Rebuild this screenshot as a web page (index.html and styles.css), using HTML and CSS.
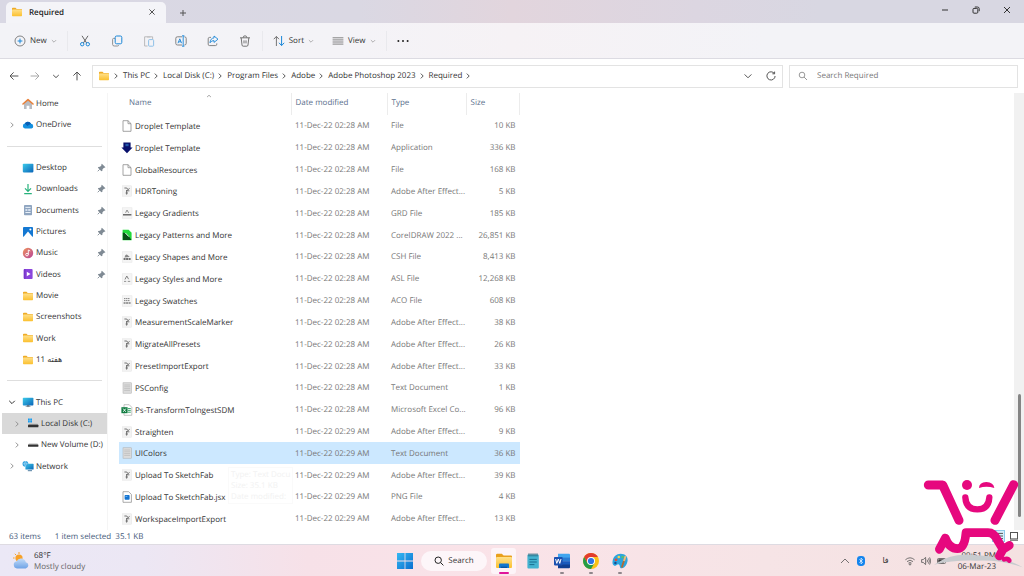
FILE: index.html
```html
<!DOCTYPE html>
<html lang="en">
<head>
  <meta charset="UTF-8">
  <title>Required</title>
  <link rel="stylesheet" href="styles.css">
</head>
<body>

<!-- icon sprite -->
<svg class="sprite" aria-hidden="true">
  <defs>
    <linearGradient id="gFolder" x1="0" y1="0" x2="0" y2="1"><stop offset="0" stop-color="#ffe08a"/><stop offset="1" stop-color="#fbc02f"/></linearGradient>
    <linearGradient id="gBlue" x1="0" y1="0" x2="1" y2="1"><stop offset="0" stop-color="#3ccbea"/><stop offset="1" stop-color="#0a64b8"/></linearGradient>
    <linearGradient id="gMusic" x1="0" y1="0" x2="1" y2="1"><stop offset="0" stop-color="#f0935a"/><stop offset="1" stop-color="#b7449a"/></linearGradient>
    <linearGradient id="gWin" x1="0" y1="0" x2="1" y2="1"><stop offset="0" stop-color="#35b8f2"/><stop offset="1" stop-color="#0a6fd0"/></linearGradient>
    <linearGradient id="gCloud" x1="0" y1="0" x2="0" y2="1"><stop offset="0" stop-color="#c3dcf8"/><stop offset="1" stop-color="#6fa3e6"/></linearGradient>
  </defs>
  <symbol id="folder" viewBox="0 0 12 12"><path d="M1 2.6q0-.8.8-.8h2.7l1.2 1.1h4.5q.8 0 .8.8V6H1z" fill="#eeab26"/><rect x="1" y="3.5" width="10" height="6.7" rx=".7" fill="url(#gFolder)"/></symbol>
  <symbol id="home" viewBox="0 0 12 12"><path d="M2 5.5 6 2l4 3.5V11H7.4V7.8H4.6V11H2z" fill="#b9bcc2"/><path d="M1 6 6 1.6 11 6" fill="none" stroke="#e8813a" stroke-width="1.6" stroke-linecap="round" stroke-linejoin="round"/></symbol>
  <symbol id="onedrive" viewBox="0 0 12 12"><path d="M3 9.5a2.5 2.5 0 0 1-.2-4.9A3.4 3.4 0 0 1 9 4.8a2.4 2.4 0 0 1 .5 4.7z" fill="#1490df"/><path d="M2.8 4.6A3.4 3.4 0 0 1 9 4.8L5.4 7z" fill="#0a5fb5"/></symbol>
  <symbol id="desktop" viewBox="0 0 12 12"><rect x=".8" y="1.8" width="10.6" height="8.6" rx=".8" fill="url(#gBlue)"/></symbol>
  <symbol id="download" viewBox="0 0 12 12"><path d="M6 1v7M3 5.4l3 3 3-3M2.2 10.7h7.6" fill="none" stroke="#27b27c" stroke-width="1.2"/></symbol>
  <symbol id="document" viewBox="0 0 12 12"><rect x="2" y="1" width="8" height="10.2" rx=".8" fill="#8fa5c0"/><path d="M3.4 3.4h5.2M3.4 8.5h5.2" stroke="#e9f0f8"/><path d="M3.4 5h2v2h-2zM6.2 5h2.4v2H6.2z" fill="#d5e0ee"/></symbol>
  <symbol id="picture" viewBox="0 0 12 12"><rect x="1" y="1" width="10" height="10" rx=".9" fill="#1478d2"/><path d="M1.4 11 6 5.4 10.6 11z" fill="#fff"/><circle cx="8.4" cy="3.6" r="1" fill="#fff"/></symbol>
  <symbol id="music" viewBox="0 0 12 12"><circle cx="6" cy="6" r="5.2" fill="url(#gMusic)"/><circle cx="5" cy="7.6" r="1.3" fill="none" stroke="#fff" stroke-width=".9"/><path d="M6.3 7.6V3l1.9 1" fill="none" stroke="#fff" stroke-width=".9"/></symbol>
  <symbol id="video" viewBox="0 0 12 12"><rect x="1.6" y="1" width="9" height="10" rx="1" fill="#8a45dc"/><path d="M2.8 1.4v9.4" stroke="#5b22ac" stroke-width="1.2" stroke-dasharray="1 1"/><path d="M4.8 3.8v4.4L8.6 6z" fill="#fff"/></symbol>
  <symbol id="pc" viewBox="0 0 12 12"><rect x=".8" y="1.8" width="10.6" height="7.6" rx=".7" fill="url(#gBlue)"/><path d="M5 9.4h2.2v1.2H5zM3.6 10.5H8.6" stroke="#7d8b98" stroke-width=".6"/></symbol>
  <symbol id="diskwin" viewBox="0 0 12 12"><path d="M1 .6h1.8v1.8H1zM3.200.6H5v1.800H3.200zM1 2.800h1.800v1.800H1zM3.200 2.800H5v1.800H3.200z" fill="#199df0"/><path d="M2 5.800h8.400l1 1.200H1z" fill="#aaa"/><rect x="1" y="6.800" width="10.400" height="2.400" rx=".5" fill="#333"/></symbol>
  <symbol id="disk" viewBox="0 0 12 12"><path d="M2 4.4h8.4l1 1.2H1z" fill="#bbb"/><rect x="1" y="5.4" width="10.4" height="2.4" rx=".5" fill="#333"/></symbol>
  <symbol id="network" viewBox="0 0 12 12"><rect x="3.4" y="3.8" width="8.2" height="5.8" rx=".6" fill="url(#gBlue)"/><path d="M5.8 10.7h4.2" stroke="#4f7ea2"/><circle cx="3.4" cy="3.8" r="2.9" fill="#2f9fdd"/><path d="M.6 3.8h5.6M3.4 1q-2 2.8 0 5.6M3.4 1q2 2.8 0 5.6" fill="none" stroke="#bfe8fb" stroke-width=".5"/></symbol>
  <symbol id="pin" viewBox="0 0 10 10"><path d="M5.4.8 9.400 4.600l-.9.8-.7-.1-1.700 1.700-.1 1.700-1.100.5L1 5.400l.5-1 1.900-.1L5 2.600l-.2-.9z" fill="#7f8a94"/><path d="M3 7 .8 9.200" stroke="#7f8a94"/></symbol>
  <symbol id="right" viewBox="0 0 8 8"><path d="m2.8 1.6 2.4 2.4-2.4 2.4" fill="none" stroke="currentColor" stroke-width=".9"/></symbol>
  <symbol id="down" viewBox="0 0 8 8"><path d="M1.2 2.8 4 5.6l2.8-2.8" fill="none" stroke="currentColor" stroke-width="1"/></symbol>

  <symbol id="f-page" viewBox="0 0 12 12"><path d="M2 .7h5L10 3.6v7.7H2z" fill="#fff" stroke="#8d8d8d" stroke-width=".8"/><path d="M7 .7v3h3" fill="none" stroke="#8d8d8d" stroke-width=".8"/></symbol>
  <symbol id="f-droplet" viewBox="0 0 12 12"><path d="M2.400.600h7.200v4.800h2L6 11.300.4 5.400h2z" fill="#08106b"/><path d="M4.400 1.800h3.200v2.400H4.400z" fill="#235aa9"/></symbol>
  <symbol id="f-script" viewBox="0 0 12 12"><rect x="1.6" y=".8" width="9" height="10.4" fill="#f3f3f3" stroke="#e2e2e2" stroke-width=".5"/><path d="M3.4 3h2.4l1 1.4M8.6 3.4l-3 2.4h2.8M5.6 5v4.6M7 8h-2.4" fill="none" stroke="#666" stroke-width=".9"/></symbol>
  <symbol id="f-grd" viewBox="0 0 12 12"><rect x="1.2" y=".8" width="9.8" height="10.4" fill="#f5f5f5" stroke="#e2e2e2" stroke-width=".5"/><path d="M4.6 5.8 6 3l1.6 2.8" fill="none" stroke="#777" stroke-width=".8"/><path d="M2 7.8h8.4" stroke="#555" stroke-width="1.3"/></symbol>
  <symbol id="f-csh" viewBox="0 0 12 12"><rect x="1.2" y=".8" width="9.8" height="10.4" fill="#f5f5f5" stroke="#e2e2e2" stroke-width=".5"/><path d="M3.4 6.4q1.2-4 2.8-2.6T8.8 6z" fill="#888"/><path d="M2.6 8h7" stroke="#444" stroke-width="1.3" stroke-dasharray="2 .5"/></symbol>
  <symbol id="f-asl" viewBox="0 0 12 12"><rect x="1.2" y=".8" width="9.8" height="10.4" fill="#f5f5f5" stroke="#e2e2e2" stroke-width=".5"/><path d="M4 6.4 5.8 3l1.8 3.2" fill="none" stroke="#777" stroke-width=".9"/><path d="M3 8.4h2.2M6.8 8.4h2.4" stroke="#888" stroke-width=".9"/></symbol>
  <symbol id="f-aco" viewBox="0 0 12 12"><rect x="1.2" y=".8" width="9.8" height="10.4" fill="#f5f5f5" stroke="#e2e2e2" stroke-width=".5"/><path d="M3 3.6h6M3 5.6h6" stroke="#777" stroke-width=".9" stroke-dasharray="1.4 .5"/><path d="M2.6 8h7" stroke="#444" stroke-width="1.2" stroke-dasharray="2 .5"/></symbol>
  <symbol id="f-corel" viewBox="0 0 12 12"><path d="M1.6.8h6l3 3v7.4h-9z" fill="#22d83a"/><path d="M1.8 3.6q4 .2 8.6 7.4H1.8z" fill="#075115"/><path d="M4.400 4 7.800 7.600" stroke="#fff" stroke-width=".9"/></symbol>
  <symbol id="f-text" viewBox="0 0 12 12"><rect x="2" y=".8" width="8.4" height="10.4" fill="#dcdcdc" stroke="#aaa" stroke-width=".5"/><path d="M3.2 3h6M3.2 4.8h6M3.2 6.6h6M3.2 8.4h6" stroke="#b3b3b3" stroke-width=".6"/></symbol>
  <symbol id="f-excel" viewBox="0 0 12 12"><path d="M3 .7h5.2l2.6 2.6v8H3z" fill="#fff" stroke="#9a9a9a" stroke-width=".6"/><path d="M7 4.6h2.8M7 6.4h2.8M7 8.2h2.8" stroke="#35a86b" stroke-width="1"/><rect x=".4" y="3.2" width="6.2" height="6" fill="#107c41"/><path d="m2.2 4.6 2.6 3.2M4.8 4.6 2.2 7.8" stroke="#fff" stroke-width=".9"/></symbol>
  <symbol id="f-png" viewBox="0 0 12 12"><path d="M2 .7h5.6L10.4 3.4v7.9H2z" fill="#fff" stroke="#888" stroke-width=".7"/><rect x="3.6" y="4" width="5" height="4.8" rx=".8" fill="#1473d0"/><path d="M4.4 5.4h2" stroke="#7cc4ff" stroke-width=".8"/></symbol>
</svg>

<header class="titlebar">
  <div class="tab">
    <svg class="icon"><use href="#folder"/></svg>
    <span class="tab-title">Required</span>
    <button class="tab-close" aria-label="Close tab"><svg viewBox="0 0 8 8"><path d="m1.4 1.4 5.2 5.2M6.6 1.4 1.4 6.6"/></svg></button>
  </div>
  <button class="new-tab" aria-label="New tab"><svg viewBox="0 0 8 8"><path d="M4 1v6M1 4h6"/></svg></button>
  <div class="window-buttons">
    <button aria-label="Minimize"><svg viewBox="0 0 8 8"><path d="M1 4h6"/></svg></button>
    <button aria-label="Restore"><svg viewBox="0 0 8 8"><rect x="1" y="2.4" width="4.8" height="4.8" rx="1"/><path d="M2.8 1h2.6Q7.2 1 7.2 2.8v2.4"/></svg></button>
    <button aria-label="Close"><svg viewBox="0 0 8 8"><path d="m1 1 6 6M7 1 1 7"/></svg></button>
  </div>
</header>

<div class="toolbar">
  <button class="tool tool-new">
    <svg class="icon" viewBox="0 0 12 12"><circle cx="6" cy="6" r="5" fill="none" stroke="#666" stroke-width=".8"/><path d="M6 3.6v4.8M3.6 6h4.8" stroke="#1a87d8"/></svg>
    New <svg class="caret"><use href="#down"/></svg>
  </button>
  <div class="tool-icons">
    <button class="tool" aria-label="Cut"><svg class="icon" viewBox="0 0 12 12"><path d="M3 .8 7.6 8M9 .8 4.4 8" fill="none" stroke="#555" stroke-width=".9"/><circle cx="3.2" cy="9.2" r="1.7" fill="none" stroke="#1a87d8"/><circle cx="8.8" cy="9.2" r="1.7" fill="none" stroke="#1a87d8"/></svg></button>
    <button class="tool" aria-label="Copy"><svg class="icon" viewBox="0 0 12 12"><path d="M4 3.4H2.6q-1 0-1 1v5q0 1.6 1.6 1.6h3.4q1 0 1-1" fill="none" stroke="#888" stroke-width=".9"/><rect x="4.2" y="1" width="6.6" height="7.8" rx="1.4" fill="none" stroke="#1a87d8"/></svg></button>
    <button class="tool faded" aria-label="Paste"><svg class="icon" viewBox="0 0 12 12"><path d="M4.6 11H1.6V1.8h8v2.4" fill="none" stroke="#777" stroke-width=".9"/><path d="M4 1h3.4v1.6H4z" fill="#999"/><rect x="5.6" y="4.6" width="5" height="6.6" rx=".8" fill="none" stroke="#1a87d8" stroke-width=".9"/></svg></button>
    <button class="tool" aria-label="Rename"><svg class="icon" viewBox="0 0 12 12"><path d="M7 1.8H2.4Q.8 1.8.8 3.4v5q0 1.6 1.6 1.6H7M9.4 1.8q1.8 0 1.8 1.6v5q0 1.6-1.8 1.6" fill="none" stroke="#777" stroke-width=".9"/><path d="M3 8.2 4.8 3.8l1.8 4.4M3.6 6.8H6M8.2.8v10.4M7 .8h2.4M7 11.2h2.4" fill="none" stroke="#1a87d8" stroke-width=".9"/></svg></button>
    <button class="tool" aria-label="Share"><svg class="icon" viewBox="0 0 12 12"><path d="M4 2.4H2.6q-1.4 0-1.4 1.4v5.4q0 1.4 1.4 1.4h5.8q1.4 0 1.4-1.4V8.4" fill="none" stroke="#777" stroke-width=".9"/><path d="M7 1 11 4.2 7 7.4V5.6Q4.4 5.4 3 7.8 3.4 3.2 7 2.9z" fill="none" stroke="#1a87d8" stroke-width=".9" stroke-linejoin="round"/></svg></button>
    <button class="tool" aria-label="Delete"><svg class="icon" viewBox="0 0 12 12"><path d="M1 2.8h10M4.2 2.6q0-1.8 1.8-1.8t1.8 1.8M2.2 3l.8 7q.1 1.2 1.2 1.2h3.6q1.1 0 1.2-1.2l.8-7M5 5.4v3M7 5.4v3" fill="none" stroke="#666" stroke-width=".9"/></svg></button>
  </div>
  <div class="tool-menus">
    <button class="tool">
      <svg class="icon" viewBox="0 0 12 12"><path d="M3.4 11V1.6M.8 4.2l2.6-2.8L6 4.2" fill="none" stroke="#666" stroke-width=".9"/><path d="M8.6 1v9.4M6 7.8l2.6 2.8 2.6-2.8" fill="none" stroke="#1a87d8"/></svg>
      Sort <svg class="caret"><use href="#down"/></svg>
    </button>
    <button class="tool">
      <svg class="icon" viewBox="0 0 12 12"><path d="M.6 2.8h10.8M.6 4.9h10.8M.6 7h10.8M.6 9.1h10.8" stroke="#777" stroke-width=".9"/></svg>
      View <svg class="caret"><use href="#down"/></svg>
    </button>
  </div>
  <button class="tool" aria-label="See more"><svg class="icon" viewBox="0 0 12 12"><circle cx="1.4" cy="6" r="1" fill="#222"/><circle cx="6" cy="6" r="1" fill="#222"/><circle cx="10.6" cy="6" r="1" fill="#222"/></svg></button>
</div>

<div class="address-row">
  <div class="nav-buttons">
    <button aria-label="Back"><svg viewBox="0 0 10 10"><path d="M9.4 5H1M4.6 1.4 1 5l3.6 3.6"/></svg></button>
    <button class="faded" aria-label="Forward"><svg viewBox="0 0 10 10"><path d="M.6 5H9M5.4 1.4 9 5 5.4 8.6"/></svg></button>
    <button aria-label="Recent locations"><svg viewBox="0 0 10 10"><path d="M2.2 4 5 6.6 7.8 4"/></svg></button>
    <button aria-label="Up"><svg viewBox="0 0 10 10"><path d="M5 9.4V1M1.4 4.6 5 1l3.6 3.6"/></svg></button>
  </div>
  <div class="address-bar">
    <svg class="icon"><use href="#folder"/></svg>
    <svg class="sep"><use href="#right"/></svg>
    <a href="#">This PC</a>
    <svg class="sep"><use href="#right"/></svg>
    <a href="#">Local Disk (C:)</a>
    <svg class="sep"><use href="#right"/></svg>
    <a href="#">Program Files</a>
    <svg class="sep"><use href="#right"/></svg>
    <a href="#">Adobe</a>
    <svg class="sep"><use href="#right"/></svg>
    <a href="#">Adobe Photoshop 2023</a>
    <svg class="sep"><use href="#right"/></svg>
    <a href="#">Required</a>
    <svg class="sep"><use href="#right"/></svg>
    <div class="address-actions">
      <button aria-label="Previous locations"><svg viewBox="0 0 10 10"><path d="M1.6 3.4 5 6.8l3.4-3.4"/></svg></button>
      <button aria-label="Refresh"><svg viewBox="0 0 10 10"><path d="M8.4 2.6A4.1 4.1 0 1 0 9.1 5M8.6.6v2.2H6.4"/></svg></button>
    </div>
  </div>
  <label class="search-box">
    <svg viewBox="0 0 10 10"><circle cx="4" cy="4" r="2.8"/><path d="m6 6 3 3"/></svg>
    <input type="search" placeholder="Search Required" aria-label="Search Required">
  </label>
</div>

<main class="content">
  <nav class="sidebar">
    <ul>
      <li><a href="#"><span class="twist"></span><svg class="icon"><use href="#home"/></svg>Home</a></li>
      <li><a href="#"><svg class="twist"><use href="#right"/></svg><svg class="icon"><use href="#onedrive"/></svg>OneDrive</a></li>
      <li class="divider"></li>
      <li><a href="#"><span class="twist"></span><svg class="icon"><use href="#desktop"/></svg>Desktop<svg class="pin"><use href="#pin"/></svg></a></li>
      <li><a href="#"><span class="twist"></span><svg class="icon"><use href="#download"/></svg>Downloads<svg class="pin"><use href="#pin"/></svg></a></li>
      <li><a href="#"><span class="twist"></span><svg class="icon"><use href="#document"/></svg>Documents<svg class="pin"><use href="#pin"/></svg></a></li>
      <li><a href="#"><span class="twist"></span><svg class="icon"><use href="#picture"/></svg>Pictures<svg class="pin"><use href="#pin"/></svg></a></li>
      <li><a href="#"><span class="twist"></span><svg class="icon"><use href="#music"/></svg>Music<svg class="pin"><use href="#pin"/></svg></a></li>
      <li><a href="#"><span class="twist"></span><svg class="icon"><use href="#video"/></svg>Videos<svg class="pin"><use href="#pin"/></svg></a></li>
      <li><a href="#"><span class="twist"></span><svg class="icon"><use href="#folder"/></svg>Movie</a></li>
      <li><a href="#"><span class="twist"></span><svg class="icon"><use href="#folder"/></svg>Screenshots</a></li>
      <li><a href="#"><span class="twist"></span><svg class="icon"><use href="#folder"/></svg>Work</a></li>
      <li><a href="#"><span class="twist"></span><svg class="icon"><use href="#folder"/></svg><span>11 <bdi lang="fa">هفته</bdi></span></a></li>
      <li class="divider"></li>
      <li><a href="#"><svg class="twist open"><use href="#down"/></svg><svg class="icon"><use href="#pc"/></svg>This PC</a></li>
      <li class="nested selected"><a href="#"><svg class="twist"><use href="#right"/></svg><svg class="icon"><use href="#diskwin"/></svg>Local Disk (C:)</a></li>
      <li class="nested"><a href="#"><svg class="twist"><use href="#right"/></svg><svg class="icon"><use href="#disk"/></svg>New Volume (D:)</a></li>
      <li><a href="#"><svg class="twist"><use href="#right"/></svg><svg class="icon"><use href="#network"/></svg>Network</a></li>
    </ul>
  </nav>

  <section class="files">
    <table>
      <thead>
        <tr>
          <th class="col-name">Name<svg class="sort-mark" viewBox="0 0 8 8"><path d="M1.4 5.4 4 3l2.6 2.4"/></svg></th>
          <th class="col-date">Date modified</th>
          <th class="col-type">Type</th>
          <th class="col-size">Size</th>
        </tr>
      </thead>
      <tbody>
        <tr><td><svg class="icon"><use href="#f-page"/></svg>Droplet Template</td><td>11-Dec-22 02:28 AM</td><td>File</td><td>10 KB</td></tr>
        <tr><td><svg class="icon"><use href="#f-droplet"/></svg>Droplet Template</td><td>11-Dec-22 02:28 AM</td><td>Application</td><td>336 KB</td></tr>
        <tr><td><svg class="icon"><use href="#f-page"/></svg>GlobalResources</td><td>11-Dec-22 02:28 AM</td><td>File</td><td>168 KB</td></tr>
        <tr><td><svg class="icon"><use href="#f-script"/></svg>HDRToning</td><td>11-Dec-22 02:28 AM</td><td>Adobe After Effect...</td><td>5 KB</td></tr>
        <tr><td><svg class="icon"><use href="#f-grd"/></svg>Legacy Gradients</td><td>11-Dec-22 02:28 AM</td><td>GRD File</td><td>185 KB</td></tr>
        <tr><td><svg class="icon"><use href="#f-corel"/></svg>Legacy Patterns and More</td><td>11-Dec-22 02:28 AM</td><td>CorelDRAW 2022 ...</td><td>26,851 KB</td></tr>
        <tr><td><svg class="icon"><use href="#f-csh"/></svg>Legacy Shapes and More</td><td>11-Dec-22 02:28 AM</td><td>CSH File</td><td>8,413 KB</td></tr>
        <tr><td><svg class="icon"><use href="#f-asl"/></svg>Legacy Styles and More</td><td>11-Dec-22 02:28 AM</td><td>ASL File</td><td>12,268 KB</td></tr>
        <tr><td><svg class="icon"><use href="#f-aco"/></svg>Legacy Swatches</td><td>11-Dec-22 02:28 AM</td><td>ACO File</td><td>608 KB</td></tr>
        <tr><td><svg class="icon"><use href="#f-script"/></svg>MeasurementScaleMarker</td><td>11-Dec-22 02:28 AM</td><td>Adobe After Effect...</td><td>38 KB</td></tr>
        <tr><td><svg class="icon"><use href="#f-script"/></svg>MigrateAllPresets</td><td>11-Dec-22 02:28 AM</td><td>Adobe After Effect...</td><td>26 KB</td></tr>
        <tr><td><svg class="icon"><use href="#f-script"/></svg>PresetImportExport</td><td>11-Dec-22 02:28 AM</td><td>Adobe After Effect...</td><td>33 KB</td></tr>
        <tr><td><svg class="icon"><use href="#f-text"/></svg>PSConfig</td><td>11-Dec-22 02:28 AM</td><td>Text Document</td><td>1 KB</td></tr>
        <tr><td><svg class="icon"><use href="#f-excel"/></svg>Ps-TransformToIngestSDM</td><td>11-Dec-22 02:28 AM</td><td>Microsoft Excel Co...</td><td>96 KB</td></tr>
        <tr><td><svg class="icon"><use href="#f-script"/></svg>Straighten</td><td>11-Dec-22 02:29 AM</td><td>Adobe After Effect...</td><td>9 KB</td></tr>
        <tr class="selected"><td><svg class="icon"><use href="#f-text"/></svg>UIColors</td><td>11-Dec-22 02:29 AM</td><td>Text Document</td><td>36 KB</td></tr>
        <tr><td><svg class="icon"><use href="#f-script"/></svg>Upload To SketchFab</td><td>11-Dec-22 02:29 AM</td><td>Adobe After Effect...</td><td>39 KB</td></tr>
        <tr><td><svg class="icon"><use href="#f-png"/></svg>Upload To SketchFab.jsx</td><td>11-Dec-22 02:29 AM</td><td>PNG File</td><td>4 KB</td></tr>
        <tr><td><svg class="icon"><use href="#f-script"/></svg>WorkspaceImportExport</td><td>11-Dec-22 02:29 AM</td><td>Adobe After Effect...</td><td>13 KB</td></tr>
      </tbody>
    </table>
    <!-- tooltip fading out -->
    <div class="tooltip">Type: Text Docu<br>Size: 35.1 KB<br>Date modified:</div>
  </section>

  <div class="scrollbar"><div class="thumb"></div></div>
</main>

<div class="statusbar">
  <span>63 items</span>
  <span>1 item selected&nbsp; 35.1 KB</span>
  <div class="view-switch">
    <button class="active" aria-label="Details"><svg viewBox="0 0 10 10"><path d="M1 2.4h8M1 5h8M1 7.6h8"/></svg></button>
    <button aria-label="Large icons"><svg viewBox="0 0 10 10"><rect x="1.5" y="1.5" width="7" height="6.4"/><path d="M1 9.2h8"/></svg></button>
  </div>
</div>

<footer class="taskbar">
  <a class="weather" href="#">
    <svg viewBox="0 0 18 18"><circle cx="7" cy="6" r="3.6" fill="#f7a128"/><path d="M7 0v2M1 6h1.6M2.8 1.8l1.2 1.2" stroke="#f7a128"/><path d="M5 16.4a3.6 3.6 0 0 1-.4-7.1 4.9 4.9 0 0 1 9.2 1 3.1 3.1 0 0 1 0 6.1z" fill="url(#gCloud)"/></svg>
    <span>68°F<br><small>Mostly cloudy</small></span>
  </a>
  <div class="apps">
    <button class="app" aria-label="Start"><svg viewBox="0 0 16 16"><path d="M0 0h7.6v7.6H0zM8.4 0H16v7.6H8.4zM0 8.4h7.6V16H0zM8.4 8.4H16V16H8.4z" fill="url(#gWin)"/></svg></button>
    <button class="task-search"><svg viewBox="0 0 10 10"><circle cx="4.2" cy="4.2" r="3.2"/><path d="m6.6 6.6 2.8 2.8"/></svg>Search</button>
    <button class="app running current" aria-label="File Explorer"><svg viewBox="0 0 16 16"><path d="M0 2q0-1.2 1.2-1.2h4.6L7.6 2.6H15q1 0 1 1V8H0z" fill="#e9a01c"/><rect y="4" width="16" height="11" rx="1" fill="url(#gFolder)"/><path d="M3 15v-3.6q0-.8.8-.8h8.4q.8 0 .8.8V15z" fill="#1477cf"/><path d="M5 15v-1.4h6V15z" fill="#0a56a4"/></svg></button>
    <button class="app" aria-label="Notepad"><svg viewBox="0 0 16 16"><rect x="2.4" y="1.6" width="11.4" height="14" rx="1" fill="#45b3d0"/><path d="M4 .4v3M6 .4v3M8 .4v3M10 .4v3M12 .4v3" stroke="#285f73"/><path d="M4.4 6.4h7.4M4.4 9h7.4M4.4 11.6h5" stroke="#1b6f90"/></svg></button>
    <button class="app running" aria-label="Word"><svg viewBox="0 0 16 16"><path d="M4 .8h11q1 0 1 1v3.4H4z" fill="#41a5ee"/><path d="M4 4.6h12v3.8H4z" fill="#2b7cd3"/><path d="M4 8.2h12V12H4z" fill="#185abd"/><path d="M4 11.6h12v2.6q0 1-1 1H4z" fill="#103f91"/><rect y="4" width="8.6" height="8.4" rx=".8" fill="#1b51b0"/><path d="m1.6 6 1.2 4.4L4.3 6l1.5 4.4L7 6" fill="none" stroke="#fff"/></svg></button>
    <button class="app running" aria-label="Chrome"><svg viewBox="0 0 16 16"><circle cx="8" cy="8" r="8" fill="#fbc116"/><path d="M1.1 4A8 8 0 0 1 14.9 4H8L4.6 10z" fill="#e33b2e"/><path d="M1.1 4A8 8 0 0 0 8 16l3.5-6-3.5 2-3.5-2z" fill="#259b48"/><circle cx="8" cy="8" r="4" fill="#fff"/><circle cx="8" cy="8" r="3.1" fill="#2f74e5"/></svg></button>
    <button class="app running" aria-label="Paint"><svg viewBox="0 0 16 16"><path d="M8.6.8C13 .8 16 3.6 15.6 7.4c-.3 3-2.4 7.8-6 7.8-2.6 0-1-3.4-3-3.8-1.6-.3-2.4 2-4.2 1.4C.6 12.2.2 10.2.6 8 1.2 3.8 4.4.8 8.6.8z" fill="#2ba5de"/><circle cx="4" cy="6.8" r="1.4" fill="#e34b38"/><circle cx="6.8" cy="4" r="1.3" fill="#f8d34c"/><circle cx="10.6" cy="4" r="1.3" fill="#58c06a"/><circle cx="3.4" cy="10" r="1.2" fill="#174c91"/><path d="m12.8 5-3 9.6" stroke="#b56a32" stroke-width="1.8"/><path d="m13.6 3-1.6 5" stroke="#e8bb7e" stroke-width="2"/></svg></button>
  </div>
  <div class="tray">
    <button aria-label="Show hidden icons"><svg viewBox="0 0 10 10"><path d="M1 7 5 3l4 4"/></svg></button>
    <button aria-label="Bluetooth"><svg viewBox="0 0 10 10"><rect x="1" y="0" width="8" height="10" rx="3.4" fill="#1485ee" stroke="none"/><path d="m3.4 3.4 3.2 3L5 7.8V2.200l1.600 1.400-3.200 3" stroke="#fff" stroke-width=".7"/></svg></button>
    <span class="lang" lang="fa">فا</span>
    <button aria-label="Wi-Fi"><svg viewBox="0 0 10 10"><path d="M.4 3.8q4.6-4 9.2 0M2 5.6q3-2.8 6 0M3.4 7.2q1.6-1.4 3.2 0"/><circle cx="5" cy="8.4" r=".7"/></svg></button>
    <button aria-label="Volume"><svg viewBox="0 0 10 10"><path d="M.6 3.6h1.6L4.6 1.4v7.2L2.2 6.4H.6zM6 3.6q1 1.4 0 2.8M7.4 2.4q2 2.6 0 5.2M8.6 1.4q2.4 3.6 0 7.2"/></svg></button>
    <button aria-label="Battery"><svg viewBox="0 0 10 10"><rect x=".5" y="2.5" width="8" height="5" rx="1"/><path d="M1.6 3.6h5v2.8h-5z" fill="#333"/></svg></button>
    <time>09:51 PM<br>06-Mar-23</time>
  </div>
</footer>

<!-- shopping cart mark over the corner -->
<svg class="cart-mark" viewBox="306 54 306 270" aria-hidden="true">
  <path d="M342 314Q400 274 468 286 550 288 608 322 540 298 468 302 400 300 342 314z" fill="#c8cbce"/>
  <g fill="none" stroke="#e6087e" stroke-linecap="round" stroke-linejoin="round">
    <path d="M325 75h43l49 106M581 74l-56 107" stroke-width="27"/>
    <path d="M436 112q2 36 36 36t36-36" stroke-width="19"/>
    <path d="M358 268 376 234Q388 266 412 266 434 266 438 218H504Q522 218 532 240L549 268 568 256M549 268 538 288" stroke-width="26"/>
    <path d="M552 298q12-4 16 4" stroke-width="14"/>
  </g>
  <circle cx="441" cy="75" r="15" fill="#e6087e"/>
  <path d="M477 84q0-16 22-18 22 2 24 18-24-8-46 0z" fill="#e6087e"/>
</svg>

</body>
</html>
```

FILE: styles.css
```css
* {
  box-sizing: border-box;
}
body {
  margin: 0;
  min-height: 100vh;
  display: flex;
  flex-direction: column;
  position: relative;
  font-family: "Open Sans", "Noto Sans", sans-serif;
  font-size: 8px;
  line-height: 11px;
  text-rendering: geometricPrecision;
  color: #333;
  background-color: white;
}
button {
  display: flex;
  align-items: center;
  justify-content: center;
  padding: 0;
  border: none;
  background: none;
  font: inherit;
  text-rendering: inherit;
  color: inherit;
}
a {
  color: inherit;
  text-decoration: none;
}
svg {
  flex: none;
}
button svg, .search-box svg {
  width: 10px;
  height: 10px;
  fill: none;
  stroke: #555;
}
.sprite {
  position: absolute;
  width: 0;
  height: 0;
}
.icon, button .icon {
  width: 12px;
  height: 12px;
  stroke: none;
}
.faded {
  opacity: 0.5;
}

/* title bar */
.titlebar {
  display: flex;
  height: 23px;
  padding: 0 2px 0 6px;
  background: linear-gradient(90deg, #d9d8e4 0, #dad8e3 35%, #e2d5dd 50%, #dcd6e1 68%, #d8d7e2 80%);
}
.tab {
  display: flex;
  align-items: center;
  gap: 6px;
  width: 160px;
  margin-top: 2px;
  padding: 0 10px 1px 5px;
  border-radius: 5px 5px 0 0;
  background-color: #f4f4f8;
}
.tab-title {
  flex: 1;
  font-weight: 600;
  color: #222;
}
.tab-close svg, .new-tab svg, .window-buttons svg {
  width: 8px;
  height: 8px;
}
.new-tab {
  width: 33px;
  padding-top: 2px;
}
.window-buttons {
  display: flex;
  margin-left: auto;
}
.window-buttons button {
  width: 31px;
  padding-bottom: 3px;
}
.window-buttons svg {
  stroke: #333;
}

/* toolbar */
.toolbar {
  display: flex;
  align-items: center;
  height: 36px;
  padding-left: 14px;
  border-bottom: 1px solid #dcdbe2;
  background: linear-gradient(90deg, #f3f3f7 0, #f4f3f7 35%, #f6f2f5 50%, #f3f3f7 75%);
}
.tool {
  gap: 4px;
}
.tool-new {
  margin-right: 10px;
}
button .caret {
  width: 6px;
  height: 6px;
  color: #999;
  stroke: none;
}
.tool-icons {
  display: flex;
  gap: 20px;
  padding: 4px 11px;
  border-left: 1px solid #e9e9ed;
  border-right: 1px solid #e9e9ed;
}
.tool-menus {
  display: flex;
  gap: 18px;
  margin-right: 10px;
  padding: 4px 10px;
  border-right: 1px solid #e9e9ed;
}

/* address row */
.address-row {
  display: flex;
  align-items: center;
  height: 34px;
  padding: 0 6px 0 9px;
}
.nav-buttons {
  display: flex;
  gap: 11px;
  width: 83px;
}
.address-bar {
  flex: 1;
  display: flex;
  align-items: center;
  height: 23px;
  padding: 0 6px 1px 5px;
  border: 1px solid #e3e3e3;
}
.sep {
  width: 8px;
  height: 8px;
  margin: 0 3px 0 2px;
  color: #444;
}
.address-actions {
  display: flex;
  gap: 13px;
  margin-left: auto;
}
.search-box {
  display: flex;
  align-items: center;
  gap: 9px;
  width: 229px;
  height: 23px;
  margin-left: 6px;
  padding: 0 8px 1px;
  border: 1px solid #e3e3e3;
}
.search-box svg {
  stroke: #999;
}
.search-box input {
  flex: 1;
  min-width: 0;
  padding: 0;
  border: none;
  outline: none;
  background: none;
  font: inherit;
  text-rendering: inherit;
}
.search-box input::placeholder {
  color: #777;
}

/* sidebar */
.content {
  flex: 1;
  display: flex;
}
.sidebar {
  width: 108px;
  border-right: 1px solid #f5f5f5;
}
.sidebar ul {
  display: grid;
  grid-auto-rows: 1fr;
  height: 384px;
  margin: 0;
  padding: 0 0 0 2px;
  list-style: none;
}
.sidebar a {
  display: flex;
  align-items: center;
  height: 100%;
  padding: 0 1px 0 6px;
  white-space: nowrap;
}
.sidebar .icon {
  margin-right: 2px;
}
.twist {
  width: 8px;
  height: 8px;
  margin-right: 6px;
  color: #888;
}
.twist.open {
  color: #333;
}
.nested a {
  padding-left: 11px;
}
.sidebar .selected {
  background-color: #d9d9d9;
}
.divider {
  align-self: center;
  height: 1px;
  margin: 0 5px;
  background-color: #dedede;
}
.pin {
  width: 9px;
  height: 9px;
  margin-left: auto;
}

/* file list */
.files {
  flex: 1;
  position: relative;
  padding-left: 11px;
}
table {
  width: 401px;
  height: 100%;
  table-layout: fixed;
  border-collapse: collapse;
}
th, td {
  padding: 0 4px;
  text-align: left;
  white-space: nowrap;
}
th {
  height: 22px;
  padding-bottom: 4px;
  border-right: 1px solid #ececec;
  font-weight: normal;
  color: #5b6f8c;
}
.col-name {
  width: 172px;
  padding-left: 10px;
  position: relative;
}
.col-date {
  width: 96px;
}
.col-type {
  width: 79px;
}
.sort-mark {
  position: absolute;
  top: 0;
  left: 50%;
  width: 8px;
  height: 6px;
  fill: none;
  stroke: #888;
}
td {
  color: #777;
}
td:first-child {
  padding-left: 2px;
  color: #333;
}
td:last-child {
  text-align: right;
}
td .icon {
  margin-right: 2px;
  vertical-align: -3px;
}
tr.selected {
  background-color: #cce8ff;
}
.tooltip {
  position: absolute;
  top: 374px;
  left: 120px;
  padding: 1px 2px;
  border: 1px solid #fafafa;
  color: #f2f2f2;
}
.scrollbar {
  display: flex;
  flex-direction: column;
  justify-content: flex-end;
  align-items: center;
  width: 10px;
  padding-bottom: 13px;
  background-color: #f1f1f1;
}
.thumb {
  width: 3px;
  height: 29%;
  border-radius: 2px;
  background-color: #858585;
}

/* status bar */
.statusbar {
  display: flex;
  align-items: center;
  gap: 14px;
  height: 14px;
  padding: 0 4px 2px 9px;
  color: #45597a;
}
.view-switch {
  display: flex;
  gap: 2px;
  margin-left: auto;
}
.view-switch button {
  width: 13px;
  height: 12px;
}
.view-switch .active {
  border: 1px solid #8ccbe8;
  background-color: #d5effb;
}

/* taskbar */
.taskbar {
  display: grid;
  grid-template-columns: 1fr auto 1fr;
  align-items: center;
  height: 32px;
  border-top: 1px solid #dedbe2;
  background: linear-gradient(90deg, #ebe8f6 0, #ece7f4 14%, #f7e1e8 30%, #fae3e8 50%, #f6e4e6 75%, #f5e1e1 100%);
}
.weather {
  display: flex;
  align-items: center;
  gap: 4px;
  padding-left: 12px;
}
.weather svg {
  width: 18px;
  height: 18px;
}
.weather small {
  font-size: 8px;
  color: #666;
}
.apps {
  display: flex;
  align-items: center;
  gap: 4px;
}
.app {
  position: relative;
  width: 25px;
  height: 26px;
  border-radius: 3px;
}
.app svg {
  width: 16px;
  height: 16px;
  stroke: none;
}
.app.current {
  background-color: #fdf4f8;
}
.running::after {
  content: "";
  position: absolute;
  bottom: 0;
  width: 4px;
  height: 2px;
  border-radius: 1px;
  background-color: #8f868b;
}
.current::after {
  width: 10px;
  background-color: #e0149a;
}
.task-search {
  gap: 4px;
  width: 66px;
  height: 20px;
  border-radius: 10px;
  background-color: #fdf6f9;
}
.task-search svg {
  stroke: #222;
}
.tray {
  display: flex;
  align-items: center;
  justify-content: flex-end;
  gap: 6px;
  padding-right: 28px;
}
.tray svg {
  stroke-width: 0.8;
}
.lang {
  padding: 0 10px;
}
.tray time {
  margin-left: 5px;
  text-align: right;
}

.cart-mark {
  position: absolute;
  right: 0;
  bottom: 8px;
  width: 102px;
  height: 90px;
}
```
